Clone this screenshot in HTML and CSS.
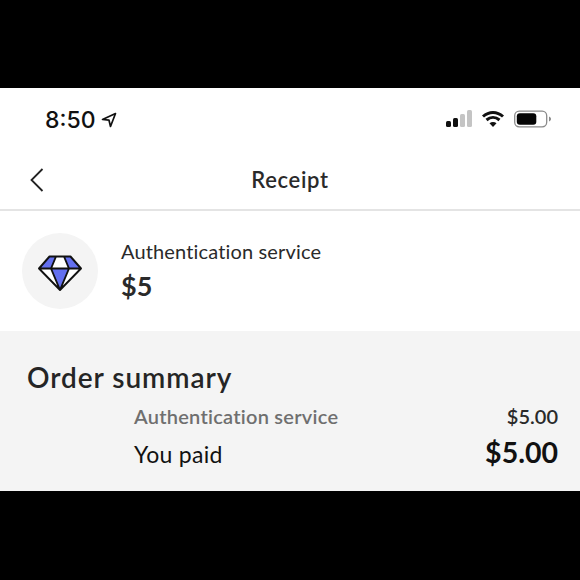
FILE: index.html
```html
<!DOCTYPE html>
<html lang="en">
<head>
<meta charset="utf-8">
<title>Receipt</title>
<link rel="stylesheet" href="styles.css">
</head>
<body>
<div class="band"></div>
<main class="screen">
  <div class="status">
    <div class="clock">
      <span class="time">8:50</span>
      <svg class="loc" width="16" height="16" viewBox="0 0 16 16"><path d="M14.500 1.500 1.500 7.500 8 8.200 9.500 14.500Z" fill="none" stroke="#111" stroke-width="1.700" stroke-linejoin="round"/></svg>
    </div>
    <div class="indicators">
      <svg width="26" height="18" viewBox="0 0 26 18"><rect x="0" y="11" width="5" height="6" rx="1.500" fill="#111"/><rect x="7" y="8" width="5" height="9" rx="1.500" fill="#111"/><rect x="14" y="4" width="5" height="13" rx="1.500" fill="#c4c4c4"/><rect x="21" y="0" width="5" height="17" rx="1.500" fill="#c4c4c4"/></svg>
      <svg width="24" height="18" viewBox="0 0 24 18"><path d="M2 6.500C8 1 16 1 22 6.500M5.500 10C9.500 6.500 14.500 6.500 18.500 10" fill="none" stroke="#111" stroke-width="3"/><path d="M8.500 13.200 12 17l3.500-3.800C13.500 11.600 10.500 11.600 8.500 13.200Z" fill="#111"/></svg>
      <svg width="37" height="18" viewBox="0 0 37 18"><rect x="0.700" y="1.200" width="32" height="15.600" rx="4.500" fill="#fff" stroke="#8a8a8a" stroke-width="1.300"/><rect x="2.800" y="3.200" width="19.500" height="11.600" rx="3" fill="#050505"/><path d="M35 6.500c1.200.4 2 1.300 2 2.500s-.8 2.100-2 2.500Z" fill="#8a8a8a"/></svg>
    </div>
  </div>
  <header class="nav">
    <svg class="back" width="16" height="26" viewBox="0 0 16 26"><path d="M13.500 2 2.500 13l11 11" fill="none" stroke="#222" stroke-width="1.800"/></svg>
    <h1 class="title">Receipt</h1>
  </header>
  <section class="item">
    <div class="avatar">
      <svg width="44" height="36" viewBox="0 0 44 36">
        <path d="M11.500 1.500h21L43 13.500 22 35 1 13.500Z" fill="#fff"/>
        <path d="M11.500 1.500h6.500L13 13.500H1ZM26 1.500h6.500L43 13.500H31ZM13 13.500h18L22 35Z" fill="#6470f0"/>
        <path d="M11.500 1.500h21L43 13.500 22 35 1 13.500ZM1 13.500h42M18 1.500 13 13.500 22 35l9-21.500L26 1.500" fill="none" stroke="#111" stroke-width="1.900" stroke-linejoin="round"/>
      </svg>
    </div>
    <div class="item-text">
      <div class="item-name">Authentication service</div>
      <div class="item-price">$5</div>
    </div>
  </section>
  <section class="summary">
    <h2 class="summary-title">Order summary</h2>
    <div class="row row-line">
      <span class="line-label">Authentication service</span>
      <span class="line-value">$5.00</span>
    </div>
    <div class="row row-total">
      <span class="total-label">You paid</span>
      <span class="total-value">$5.00</span>
    </div>
  </section>
</main>
<div class="band band-bottom"></div>
</body>
</html>
```
FILE: styles.css
```css
* { box-sizing: border-box; margin: 0; padding: 0; }
html, body { width: 580px; height: 580px; overflow: hidden; background: #000; }
body { display: flex; flex-direction: column; font-family: Lato, "Liberation Sans", sans-serif; color: #222; }
.band { height: 88px; background: #000; flex: none; }
.band-bottom { height: 89px; }
.screen { height: 403px; background: #fff; display: flex; flex-direction: column; flex: none; }
.status { height: 62px; display: flex; justify-content: space-between; align-items: center; padding: 2px 29px 0 45px; flex: none; }
.clock { display: flex; align-items: center; gap: 5px; }
.time { font-family: Inter, sans-serif; font-size: 23px; font-weight: 500; color: #111; line-height: 28px; }
.indicators { display: flex; align-items: center; gap: 9px; margin-top: -2px; }
.nav { height: 61px; position: relative; display: flex; align-items: center; justify-content: center; border-bottom: 2px solid #e4e4e4; flex: none; }
.back { position: absolute; left: 29px; top: 17px; }
.title { font-size: 22px; font-weight: 600; line-height: 28px; color: #2a2a2a; letter-spacing: 0.7px; }
.item { height: 120px; display: flex; align-items: center; gap: 23px; padding-left: 22px; flex: none; }
.avatar { width: 76px; height: 76px; border-radius: 50%; background: #f4f4f4; display: flex; align-items: center; justify-content: center; padding-top: 4px; }
.item-text { display: flex; flex-direction: column; gap: 6px; margin-top: -2px; }
.item-name { font-size: 20px; line-height: 26px; color: #2a2a2a; letter-spacing: 0.15px; }
.item-price { font-size: 27px; font-weight: 700; line-height: 32px; color: #2a2a2a; }
.summary { flex: 1; background: #f4f4f4; padding: 28px 22px 0 27px; }
.summary-title { font-size: 28px; font-weight: 600; line-height: 36px; color: #252525; margin-bottom: 6px; letter-spacing: 0.95px; }
.row { display: flex; justify-content: space-between; align-items: center; padding-left: 107px; }
.row-line { height: 30px; }
.row-total { height: 42px; margin-top: 2px; }
.line-label { font-size: 20px; font-weight: 600; color: #6f6f6f; letter-spacing: 0.25px; }
.line-value { font-size: 20px; font-weight: 600; color: #2a2a2a; }
.total-label { font-size: 23px; color: #111; letter-spacing: 0.3px; }
.total-value { font-size: 28.500px; font-weight: 700; color: #111; margin-top: -4px; }
```
